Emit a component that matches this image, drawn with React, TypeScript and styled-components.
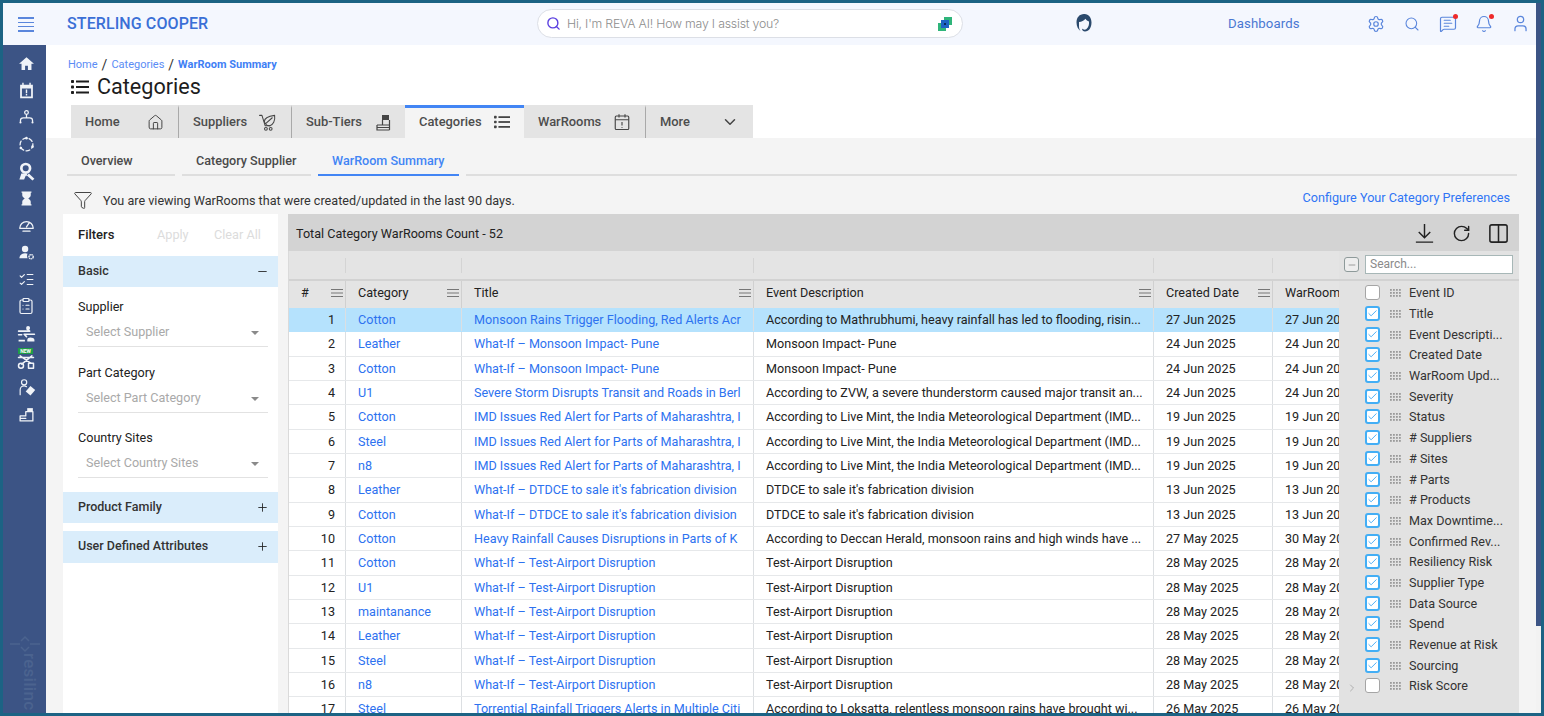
import React from "react";
import styled, { createGlobalStyle } from "styled-components";
import { Bell, ChevronDown, ChevronRight, Columns2, House, ListChecks, ClipboardList, RotateCw, Funnel, Search, Settings, User, Minus, Plus, Check, MessageSquareText } from "lucide-react";

const Global = createGlobalStyle`
  html, body { margin: 0; padding: 0; overflow: hidden; background: #fff; }
  body { font-family: Roboto, "Liberation Sans", sans-serif; color: #333; }
  * { box-sizing: border-box; }
`;

const Frame = styled.div`
  width: 1544px; height: 716px; display: flex; overflow: hidden;
  border: 3px solid #1c6384; background: #fff;
`;
const Shell = styled.div`flex: 1; min-width: 0; display: flex; flex-direction: column;`;
const Scrollbar = styled.div`width: 5px; background: #f2f2f2;`;
const ScrollThumb = styled.div`height: 623px; background: #3c5485;`;
const TopBar = styled.header`
  height: 42px; flex: none; background: #f4f7fe; display: flex; align-items: center; position: relative;
`;
const Burger = styled.div`
  width: 46px; display: flex; flex-direction: column; align-items: center; gap: 2.6px; padding-top: 1px;
  & > i { width: 16px; height: 1.6px; background: #5a86dc; display: block; }
`;
const Brand = styled.div`
  margin-left: 18px; width: 470px; font-size: 16px; font-weight: 500; color: #3a6fd6; letter-spacing: 0.1px; margin-top: -1px;
`;
const AskBox = styled.div`
  width: 426px; height: 29px; border: 1.5px solid #dcdfe6; border-radius: 15px; background: #fff;
  display: flex; align-items: center; padding: 0 9px 0 8px; gap: 6px; margin-top: -1px;
  color: #5a3fe0;
`;
const AskText = styled.span`
  flex: 1; font-family: Inter, sans-serif; font-size: 12.3px; font-weight: 300; color: #8d8d8d; letter-spacing: -0.2px;
`;
const HeadSlot = styled.div`margin-left: 104px; width: 33px; display: flex; justify-content: center; margin-top: -2px;`;
const DashLink = styled.span`margin-left: 128px; width: 138px; font-size: 13.2px; color: #4a78d2; letter-spacing: 0.1px; margin-top: -2px;`;
const TopIcons = styled.div`
  display: flex; align-items: center; gap: 16px; color: #5a86dc; margin-top: -1px;
`;
const TopIcon = styled.span`width: 20px; height: 20px; display: flex; align-items: center; justify-content: center; position: relative;`;
const RedDot = styled.i`
  position: absolute; top: 0; right: 0; width: 5px; height: 5px; border-radius: 50%; background: #ee2a2a;
`;
const Main = styled.div`flex: 1; min-height: 0; display: flex;`;
const Sidebar = styled.nav`
  width: 43px; flex: none; background: #3c5485; color: #f0f3f8; display: flex; flex-direction: column; align-items: center;
  padding: 4.5px 0 0 3px; overflow: hidden;
`;
const SideItem = styled.span`
  width: 20px; height: 27px; flex: none; display: flex; align-items: center; justify-content: center; position: relative;
`;
const NewBadge = styled.b`
  position: absolute; top: 1px; left: 2px; width: 15px; height: 6px; background: #1e9e46; color: #fff;
  font-size: 5px; line-height: 6px; text-align: center; font-weight: 700;
`;
const Watermark = styled.div`
  margin-top: auto; display: flex; flex-direction: column; align-items: center; color: #4b638f; height: 78px; flex: none; margin-left: -3px;
`;
const WatermarkWord = styled.span`
  writing-mode: vertical-rl; font-size: 17px; font-weight: 500; line-height: 17px; letter-spacing: 0.3px;
  margin-left: 10px;
`;
const WatermarkRow = styled.span`display: flex; height: 18px;`;
const Content = styled.main`flex: 1; min-width: 0; display: flex; flex-direction: column; background: #f4f4f4;`;
const Head = styled.div`height: 93px; flex: none; background: #fff; padding: 13px 0 0 22px; display: flex; flex-direction: column;`;
const Crumbs = styled.div`font-size: 11px; line-height: 14px; color: #5a8cf5; display: flex; gap: 4px; align-items: center;`;
const CrumbSep = styled.span`color: #333; font-size: 14px;`;
const CrumbNow = styled.b`font-weight: 700; font-size: 11px; color: #3f7ff5;`;
const PageTitle = styled.h1`
  margin: 1px 0 0 3px; font-size: 21.6px; line-height: 28px; font-weight: 400; color: #1d1d1d; display: flex; align-items: center; gap: 8px;
`;
const Tabs = styled.div`margin: 4px 0 0 3px; height: 33px; display: flex; width: 682px;`;
const Tab = styled.div<{ $w: number; $active?: boolean; $sep?: boolean }>`
  width: ${p => p.$w}px; flex: none; height: 33px; display: flex; align-items: center; justify-content: space-between;
  padding: 0 14px; font-size: 12.9px; font-weight: 500; color: #4d4d4d;
  background: ${p => (p.$active ? "#f4f4f4" : "#e4e4e4")};
  border-top: 3px solid ${p => (p.$active ? "#4285f4" : "#e4e4e4")};
  border-right: ${p => (p.$sep ? "1px solid #a9a9a9" : "0")};
  & > span { margin-top: -3px; }
  & > svg { margin-top: -2px; color: #444; }
`;
const SubTabs = styled.div`height: 38px; flex: none; display: flex; gap: 7px; padding: 0 19px 0 21px; align-items: flex-end;`;
const SubTab = styled.div<{ $w?: number; $active?: boolean }>`
  ${p => (p.$w ? `width: ${p.$w}px; flex: none;` : "flex: 1;")}
  height: 26px; padding: 0 0 0 14px; font-size: 12.6px; font-weight: 500; line-height: 22px;
  color: ${p => (p.$active ? "#4285f4" : "#4a4a4a")};
  border-bottom: 2px solid ${p => (p.$active ? "#4285f4" : "#dedede")};
`;
const InfoRow = styled.div`
  height: 38px; flex: none; display: flex; align-items: center; padding: 0 26px 0 27px; font-size: 12.6px; color: #333;
  & > svg { margin-right: 10px; margin-top: 9px; color: #444; }
`;
const InfoText = styled.span`flex: 1; margin-top: 10px;`;
const ConfigLink = styled.a`color: #2f74f5; font-size: 12.65px; margin-top: 4px;`;
const Body = styled.div`flex: 1; min-height: 0; display: flex; gap: 10px; padding: 0 17px;`;
const Filters = styled.aside`width: 215px; flex: none; background: #fff; display: flex; flex-direction: column;`;
const FiltersHead = styled.div`height: 42px; flex: none; display: flex; align-items: center; padding: 0 10px 1px 15px; font-size: 13px; font-weight: 500; white-space: nowrap;`;
const FiltersTitle = styled.span`width: 79px; color: #222;`;
const Ghost = styled.span<{ $w?: number }>`color: #dcdcdc; font-weight: 400; font-size: 12.7px; ${p => (p.$w ? `width: ${p.$w}px;` : "")}`;
const Band = styled.div<{ $h: number; $mt?: number }>`
  height: ${p => p.$h}px; margin-top: ${p => p.$mt ?? 0}px; flex: none; background: #daedfb; display: flex; align-items: center;
  justify-content: space-between; padding: 0 9px 0 15px; font-size: 12.5px; font-weight: 500; color: #333;
  & > span { margin-top: -2px; }
  & > svg { color: #222; }
`;
const Field = styled.div`margin: 0 10px 0 15px; height: 65.5px; padding-top: 12px; display: flex; flex-direction: column; font-size: 12.6px; color: #222;`;
const FieldSelect = styled.div`
  margin-top: 8px; height: 25px; border-bottom: 1.5px solid #e2e2e2; display: flex; align-items: center; justify-content: space-between;
  padding: 0 9px 5px 8px; color: #a9a9a9; font-size: 12.6px;
`;
const Caret = styled.i`
  width: 0; height: 0; border-left: 4px solid transparent; border-right: 4px solid transparent; border-top: 4px solid #8a8a8a; margin-top: 3px;
`;
const Grid = styled.section`flex: 1; min-width: 0; display: flex; flex-direction: column; background: #fff;`;
const GridBar = styled.div`
  height: 37px; flex: none; background: #d3d3d3; display: flex; align-items: center; padding: 1px 9px 0 8px; font-size: 12.6px; color: #222; gap: 16px;
`;
const GridCount = styled.span`flex: 1;`;
const GridBody = styled.div`flex: 1; min-height: 0; display: flex; overflow: hidden;`;
const TableArea = styled.div`width: 1051px; flex: none; overflow: hidden; border-left: 1px solid #dadada;`;
const cols = "57px 116px 292px 400px 119px 66px";
const SpacerRow = styled.div`
  display: grid; grid-template-columns: ${cols}; height: 28px; background: #e4e4e4; align-items: center;
  & > i { height: 15px; border-right: 1.5px solid #d4d4d4; display: block; }
  & > i:last-child { border-right: 0; }
`;
const HeaderRow = styled.div`
  display: grid; grid-template-columns: ${cols}; height: 29px; background: #e4e4e4; border-top: 2px solid #d2d2d2;
`;
const HeadCell = styled.div`
  display: flex; align-items: center; justify-content: space-between; padding: 0 2px 4px 12px; font-size: 12.6px; color: #222;
  border-right: 1.5px solid #d0d0d0; white-space: nowrap; overflow: hidden;
  &:last-child { border-right: 0; padding-right: 0; }
  & > svg { color: #777; flex: none; }
`;
const Row = styled.div<{ $sel?: boolean }>`
  display: grid; grid-template-columns: ${cols}; height: 24.33px; font-size: 12.6px; color: #222;
  background: ${p => (p.$sel ? "#b5e2fd" : "#fff")};
  border-bottom: 1.5px solid ${p => (p.$sel ? "#b5e2fd" : "#e6e8ea")};
`;
const Cell = styled.div<{ $link?: boolean; $num?: boolean }>`
  padding: ${p => (p.$num ? "0 10px 0 0" : "0 0 0 12px")}; line-height: 24px; white-space: nowrap; overflow: hidden;
  text-align: ${p => (p.$num ? "right" : "left")};
  color: ${p => (p.$link ? "#2d72f0" : "#222")};
  border-right: 1.5px solid #dcdfe2;
  &:last-child { border-right: 0; }
`;
const ColPanel = styled.div`
  flex: 1; background: #e2e2e2; display: flex; flex-direction: column; position: relative;
`;
const PanelTop = styled.div`
  height: 30px; flex: none; display: flex; align-items: center; padding: 0 6px 1px 5px; gap: 6px; border-bottom: 2px solid #d2d2d2; margin-bottom: 1.500px;
`;
const Box = styled.span<{ $on?: boolean }>`
  width: 15px; height: 15px; flex: none; border-radius: 3px; background: #fff; display: flex; align-items: center; justify-content: center;
  border: ${p => (p.$on ? "2px solid #43aef5" : "1.5px solid #a5a5a5")}; color: #3fa9f5;
`;
const MinusBox = styled(Box)`background: #eee; color: #777; border: 1.5px solid #8e9a9a;`;
const SearchField = styled.div`
  flex: 1; height: 19px; background: #fff; border: 1px solid #a7b7b7; font-size: 12px; color: #8a8a8a; padding: 0 4px; line-height: 17px;
`;
const PanelItem = styled.div`
  height: 20.7px; flex: none; display: flex; align-items: center; padding-left: 26px; font-size: 12.6px; color: #333; white-space: nowrap;
`;
const Grip = styled.svg`margin: 0 8px 0 10px; flex: none; color: #9a9a9a;`;
const PanelChevron = styled.span`
  position: absolute; left: 7px; bottom: 19px; color: #999; display: flex;
`;

const s = { fill: "none", stroke: "currentColor", strokeWidth: 1.8, strokeLinecap: "round" as const, strokeLinejoin: "round" as const };
const Svg = ({ size = 17, children }: { size?: number; children: React.ReactNode }) => (
  <svg width={size} height={size} viewBox="0 0 24 24">{children}</svg>
);

const SideIcons: React.ReactNode[] = [
  <Svg><path fill="currentColor" d="M12 3 1.500 12.500H5V21h5v-6h4v6h5v-8.500h3.500z" /></Svg>,
  <Svg><path fill="currentColor" fillRule="evenodd" d="M6 1h2v3h8V1h2v3h3v19H3V4h3zM5.500 9v11.500h13V9zM11 10.500h2v5.500h-2zM11 17h2v2h-2z" /></Svg>,
  <Svg><circle cx="12" cy="5" r="2.600" {...s} /><path {...s} d="M3.500 18v-2c0-2 2-3.500 4-3.500h9c2 0 4 1.500 4 3.500v2M12 8v4" /><circle cx="3.500" cy="19" r="1.500" fill="currentColor" /><circle cx="20.500" cy="19" r="1.500" fill="currentColor" /></Svg>,
  <Svg><circle cx="12" cy="12" r="9" {...s} strokeDasharray="5.500 3.500" /><circle cx="12" cy="3" r="1.800" fill="currentColor" /><circle cx="20.500" cy="15" r="1.800" fill="currentColor" /><circle cx="4" cy="17" r="1.800" fill="currentColor" /></Svg>,
  <Svg size={19}><circle cx="11" cy="8" r="5.500" fill="none" stroke="currentColor" strokeWidth="3.400" /><path fill="currentColor" d="M5.500 14.500 3 22h6l2-4.500 1 .5 1-3.500zM15 14.500l7 6.500-2.500 2.500-7-6.500z" /></Svg>,
  <Svg><path fill="currentColor" d="M5 2h14v2h-1v3.500c0 2-1.700 3.300-3.500 4.500 1.800 1.200 3.500 2.500 3.500 4.500V20h1v2H5v-2h1v-3.500c0-2 1.700-3.300 3.500-4.500C7.700 10.800 6 9.500 6 7.500V4H5z" /></Svg>,
  <Svg><path {...s} d="M2.500 16a9.500 9.500 0 0 1 19 0H2.500zM12 14l4-6M7 20h10" /></Svg>,
  <Svg><circle cx="10" cy="7" r="4.500" fill="currentColor" /><path fill="currentColor" d="M2 20c0-4 3.500-7 8-7 1.500 0 2.500.3 3.500.8-1 1.500-1 4 0 6.200z" /><circle cx="18.500" cy="18" r="3" fill="none" stroke="currentColor" strokeWidth="2" strokeDasharray="2 .6" /></Svg>,
  <ListChecks size={17} strokeWidth={1.6} />,
  <ClipboardList size={18} strokeWidth={1.6} />,
  <Svg size={19}><circle cx="14" cy="5" r="2.500" fill="currentColor" /><path {...s} strokeWidth="2" d="M2 9h14l-3-2.500M6 13.500l-4 0M22 13H9l3 3" /><path fill="currentColor" d="M2 20h8v2H2zM13 20c0-2 2-3 4-3s5 1 5 3v2h-9z" /></Svg>,
  <Svg size={20}><circle cx="6" cy="19" r="3" {...s} /><rect x="15" y="16" width="6" height="6" {...s} /><path {...s} d="M5 7l13 9M19 7 7 17M3 9h18" /></Svg>,
  <Svg size={19}><circle cx="9" cy="5.500" r="3.300" {...s} strokeWidth="1.500" /><path {...s} strokeWidth="1.500" d="M4 21v-6c0-3 2.500-5 5-5 1 0 2 .2 3 1" /><path fill="currentColor" d="m17 10 6 5-6 7-6-5z" /></Svg>,
  <Svg><path {...s} d="M3 21v-7h8V8h10v13zM3 21h18M3 17.500h8" /><rect x="13" y="3" width="8" height="5" fill="currentColor" /></Svg>,
];

const HeavyList = ({ w = 18 }: { w?: number }) => (
  <svg width={w} height={w} viewBox="0 0 18 18" fill="currentColor">
    <rect x="0" y="2" width="3" height="3" rx=".8" /><rect x="0" y="7.500" width="3" height="3" rx=".8" /><rect x="0" y="13" width="3" height="3" rx=".8" />
    <rect x="5" y="2.500" width="13" height="2" /><rect x="5" y="8" width="13" height="2" /><rect x="5" y="13.500" width="13" height="2" />
  </svg>
);
const CartLeaf = () => (
  <svg width="19" height="19" viewBox="0 0 24 24" {...s} strokeWidth={1.3}>
    <path d="M2 3h3l4 13h6" /><circle cx="10" cy="20" r="1.800" /><circle cx="16" cy="20" r="1.800" />
    <path d="M8 11c0-4 5-7 13-8 1 7-2 12-6 13-3 .5-6-2-7-5zM10 13l8-7" />
  </svg>
);
const Stairs = () => (
  <svg width="15" height="17" viewBox="0 0 15 17" fill="none" stroke="currentColor" strokeWidth="1.200">
    <rect x="6" y="1" width="7" height="5" fill="currentColor" stroke="none" />
    <path d="M6.500 6v5M13.500 6v10M1 11h12.500M1 11v5h12.500M1 13.500h12.500" />
  </svg>
);
const CalAlert = () => (
  <svg width="18" height="18" viewBox="0 0 24 24" fill="none" stroke="currentColor" strokeWidth="1.500">
    <rect x="3" y="4" width="18" height="18" rx="1.500" /><path d="M3 9h18M8 1.500V6M16 1.500V6M12 12v4.500" /><path d="M12 18.500v1" />
  </svg>
);
const MenuLines = () => (
  <svg width="12" height="10" viewBox="0 0 12 10"><path d="M0 1.500h12M0 5h12M0 8.500h12" stroke="currentColor" strokeWidth="1.200" /></svg>
);
const GripDots = () => (
  <Grip width="11" height="9" viewBox="0 0 11 9">
    {[0, 1, 2].flatMap(r => [0, 1, 2, 3].map(c => <rect key={`${r}${c}`} x={c * 3} y={r * 3 + 1} width="1.800" height="1.800" fill="currentColor" />))}
  </Grip>
);

const rows: [number, string, string, string, string, string, boolean?][] = [
  [1, "Cotton", "Monsoon Rains Trigger Flooding, Red Alerts Acr", "According to Mathrubhumi, heavy rainfall has led to flooding, risin...", "27 Jun 2025", "27 Jun 2025", true],
  [2, "Leather", "What-If – Monsoon Impact- Pune", "Monsoon Impact- Pune", "24 Jun 2025", "24 Jun 2025"],
  [3, "Cotton", "What-If – Monsoon Impact- Pune", "Monsoon Impact- Pune", "24 Jun 2025", "24 Jun 2025"],
  [4, "U1", "Severe Storm Disrupts Transit and Roads in Berl", "According to ZVW, a severe thunderstorm caused major transit an...", "24 Jun 2025", "24 Jun 2025"],
  [5, "Cotton", "IMD Issues Red Alert for Parts of Maharashtra, I", "According to Live Mint, the India Meteorological Department (IMD...", "19 Jun 2025", "19 Jun 2025"],
  [6, "Steel", "IMD Issues Red Alert for Parts of Maharashtra, I", "According to Live Mint, the India Meteorological Department (IMD...", "19 Jun 2025", "19 Jun 2025"],
  [7, "n8", "IMD Issues Red Alert for Parts of Maharashtra, I", "According to Live Mint, the India Meteorological Department (IMD...", "19 Jun 2025", "19 Jun 2025"],
  [8, "Leather", "What-If – DTDCE to sale it's fabrication division", "DTDCE to sale it's fabrication division", "13 Jun 2025", "13 Jun 2025"],
  [9, "Cotton", "What-If – DTDCE to sale it's fabrication division", "DTDCE to sale it's fabrication division", "13 Jun 2025", "13 Jun 2025"],
  [10, "Cotton", "Heavy Rainfall Causes Disruptions in Parts of K", "According to Deccan Herald, monsoon rains and high winds have ...", "27 May 2025", "30 May 2025"],
  [11, "Cotton", "What-If – Test-Airport Disruption", "Test-Airport Disruption", "28 May 2025", "28 May 2025"],
  [12, "U1", "What-If – Test-Airport Disruption", "Test-Airport Disruption", "28 May 2025", "28 May 2025"],
  [13, "maintanance", "What-If – Test-Airport Disruption", "Test-Airport Disruption", "28 May 2025", "28 May 2025"],
  [14, "Leather", "What-If – Test-Airport Disruption", "Test-Airport Disruption", "28 May 2025", "28 May 2025"],
  [15, "Steel", "What-If – Test-Airport Disruption", "Test-Airport Disruption", "28 May 2025", "28 May 2025"],
  [16, "n8", "What-If – Test-Airport Disruption", "Test-Airport Disruption", "28 May 2025", "28 May 2025"],
  [17, "Steel", "Torrential Rainfall Triggers Alerts in Multiple Citi", "According to Loksatta, relentless monsoon rains have brought wi...", "26 May 2025", "26 May 2025"],
];
const panelItems: [string, boolean][] = [
  ["Event ID", false], ["Title", true], ["Event Descripti...", true], ["Created Date", true], ["WarRoom Upd...", true],
  ["Severity", true], ["Status", true], ["# Suppliers", true], ["# Sites", true], ["# Parts", true], ["# Products", true],
  ["Max Downtime...", true], ["Confirmed Rev...", true], ["Resiliency Risk", true], ["Supplier Type", true], ["Data Source", true],
  ["Spend", true], ["Revenue at Risk", true], ["Sourcing", true], ["Risk Score", false],
];
const headers = ["#", "Category", "Title", "Event Description", "Created Date", "WarRoom"];

export default function App() {
  return (
    <>
      <Global />
      <Frame>
        <Shell>
          <TopBar>
            <Burger><i /><i /><i /><i /></Burger>
            <Brand>STERLING COOPER</Brand>
            <AskBox>
              <Search size={15} strokeWidth={2.2} />
              <AskText>Hi, I'm REVA AI! How may I assist you?</AskText>
              <svg width="16" height="16" viewBox="0 0 16 16">
                <rect x="7" y="1" width="8" height="8" fill="#2fb57a" />
                <rect x="1" y="7" width="8" height="8" fill="#2fb57a" />
                <rect x="4" y="4" width="8" height="8" fill="#1d63c4" />
                <rect x="7" y="7" width="2" height="2" fill="#0a2a5c" />
              </svg>
            </AskBox>
            <HeadSlot>
              <svg width="18" height="20" viewBox="0 0 18 20">
                <path d="M9 1C4.500 1 1.500 4.500 1.500 9.500c0 4 1.800 7 4 8.500-.8-1.200-1.500-2.800-1.500-4.500L4 9c2.500-.2 5-1.300 6.500-3.200.8 1.300 2 2.300 3.500 2.700.3 3-.5 6-2.500 7.500-1.500 1.200-3.500.6-4.500-.5 0 1.800 1.300 3 3 3 4 0 6.500-4 6.500-9 0-4.700-2.700-8.500-7-8.500z" fill="#2b4a6d" />
              </svg>
            </HeadSlot>
            <DashLink>Dashboards</DashLink>
            <TopIcons>
              <TopIcon><Settings size={18} strokeWidth={1.6} /></TopIcon>
              <TopIcon><Search size={16} strokeWidth={1.6} /></TopIcon>
              <TopIcon><MessageSquareText size={18} strokeWidth={1.6} /><RedDot /></TopIcon>
              <TopIcon><Bell size={18} strokeWidth={1.6} /><RedDot /></TopIcon>
              <TopIcon><User size={19} strokeWidth={1.6} /></TopIcon>
            </TopIcons>
          </TopBar>
          <Main>
            <Sidebar>
              {SideIcons.map((ic, i) => (
                <SideItem key={i}>{ic}{i === 11 && <NewBadge>NEW</NewBadge>}</SideItem>
              ))}
              <Watermark>
                <WatermarkRow>
                  <svg width="30" height="18" viewBox="0 0 30 18" fill="none" stroke="currentColor" strokeWidth="1.500">
                    <path d="M11 6l4-4 4 4M11 12l4 4 4-4M0 9h10M20 9h10" />
                  </svg>
                </WatermarkRow>
                <WatermarkWord>resilinc</WatermarkWord>
              </Watermark>
            </Sidebar>
            <Content>
              <Head>
                <Crumbs>
                  <span>Home</span><CrumbSep>/</CrumbSep><span>Categories</span><CrumbSep>/</CrumbSep><CrumbNow>WarRoom Summary</CrumbNow>
                </Crumbs>
                <PageTitle><HeavyList />Categories</PageTitle>
                <Tabs>
                  <Tab $w={108} $sep><span>Home</span><House size={17} strokeWidth={1.4} /></Tab>
                  <Tab $w={113} $sep><span>Suppliers</span><CartLeaf /></Tab>
                  <Tab $w={113}><span>Sub-Tiers</span><Stairs /></Tab>
                  <Tab $w={119} $active><span>Categories</span><HeavyList w={16} /></Tab>
                  <Tab $w={122} $sep><span>WarRooms</span><CalAlert /></Tab>
                  <Tab $w={107}><span>More</span><ChevronDown size={18} strokeWidth={2} /></Tab>
                </Tabs>
              </Head>
              <SubTabs>
                <SubTab $w={108}>Overview</SubTab>
                <SubTab $w={129}>Category Supplier</SubTab>
                <SubTab $w={141} $active>WarRoom Summary</SubTab>
                <SubTab />
              </SubTabs>
              <InfoRow>
                <Funnel size={20} strokeWidth={1.2} />
                <InfoText>You are viewing WarRooms that were created/updated in the last 90 days.</InfoText>
                <ConfigLink>Configure Your Category Preferences</ConfigLink>
              </InfoRow>
              <Body>
                <Filters>
                  <FiltersHead>
                    <FiltersTitle>Filters</FiltersTitle>
                    <Ghost $w={57}>Apply</Ghost>
                    <Ghost>Clear All</Ghost>
                  </FiltersHead>
                  <Band $h={31}><span>Basic</span><Minus size={13} strokeWidth={1.6} /></Band>
                  <Field>Supplier<FieldSelect>Select Supplier<Caret /></FieldSelect></Field>
                  <Field>Part Category<FieldSelect>Select Part Category<Caret /></FieldSelect></Field>
                  <Field>Country Sites<FieldSelect>Select Country Sites<Caret /></FieldSelect></Field>
                  <Band $h={31} $mt={8}><span>Product Family</span><Plus size={13} strokeWidth={1.6} /></Band>
                  <Band $h={32} $mt={8}><span>User Defined Attributes</span><Plus size={13} strokeWidth={1.6} /></Band>
                </Filters>
                <Grid>
                  <GridBar>
                    <GridCount>Total Category WarRooms Count - 52</GridCount>
                    <svg width="23" height="23" viewBox="0 0 24 24" fill="none" stroke="#222" strokeWidth="1.500">
                      <path d="M12 2v14M6 10.500l6 6 6-6M3 21h18" />
                    </svg>
                    <RotateCw size={19} strokeWidth={1.8} color="#222" />
                    <Columns2 size={23} strokeWidth={1.6} color="#222" />
                  </GridBar>
                  <GridBody>
                    <TableArea>
                      <SpacerRow>{headers.map(h => <i key={h} />)}</SpacerRow>
                      <HeaderRow>
                        {headers.map((h, i) => (
                          <HeadCell key={h}>{h}{i < 5 && <MenuLines />}</HeadCell>
                        ))}
                      </HeaderRow>
                      {rows.map(r => (
                        <Row key={r[0]} $sel={r[6]}>
                          <Cell $num>{r[0]}</Cell>
                          <Cell $link>{r[1]}</Cell>
                          <Cell $link>{r[2]}</Cell>
                          <Cell>{r[3]}</Cell>
                          <Cell>{r[4]}</Cell>
                          <Cell>{r[5]}</Cell>
                        </Row>
                      ))}
                    </TableArea>
                    <ColPanel>
                      <PanelTop>
                        <MinusBox><Minus size={10} strokeWidth={1.6} /></MinusBox>
                        <SearchField>Search...</SearchField>
                      </PanelTop>
                      {panelItems.map(([label, on]) => (
                        <PanelItem key={label}>
                          <Box $on={on}>{on && <Check size={11} strokeWidth={2} />}</Box>
                          <GripDots />
                          {label}
                        </PanelItem>
                      ))}
                      <PanelChevron><ChevronRight size={12} strokeWidth={1.4} /></PanelChevron>
                    </ColPanel>
                  </GridBody>
                </Grid>
              </Body>
            </Content>
          </Main>
        </Shell>
        <Scrollbar><ScrollThumb /></Scrollbar>
      </Frame>
    </>
  );
}
